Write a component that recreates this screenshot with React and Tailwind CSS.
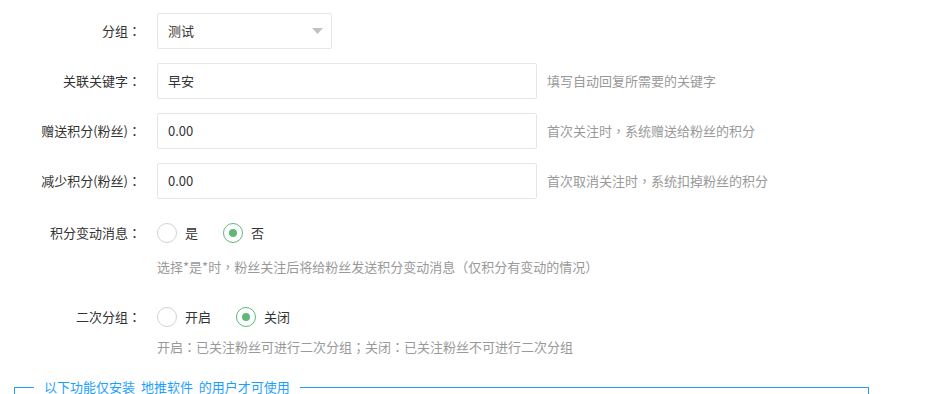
import React from "react";

const font = { fontFamily: '"Noto Sans CJK SC", "Noto Sans", sans-serif' };
const tc = { fontFamily: '"Noto Sans CJK TC", "Noto Sans CJK SC", sans-serif' };

function T({ children }) {
  const parts = String(children).split(/([，：；（）])/);
  return (
    <>
      {parts.map((p, i) =>
        /^[，：；（）]$/.test(p) ? (
          <span key={i} style={tc}>
            {p}
          </span>
        ) : (
          <React.Fragment key={i}>{p}</React.Fragment>
        )
      )}
    </>
  );
}

function Label({ children }) {
  return (
    <div className="w-[141px] shrink-0 text-right text-[13px] text-[#333] whitespace-nowrap">
      <T>{children}</T>
    </div>
  );
}

function Radio({ checked, label, last }) {
  return (
    <div className={`flex items-center ${last ? "" : "mr-[25px]"}`}>
      <span
        className={`flex h-[20px] w-[20px] items-center justify-center rounded-full border ${
          checked ? "border-[#5FB878]" : "border-[#d2d2d2]"
        }`}
      >
        {checked && <span className="h-[8px] w-[8px] rounded-full bg-[#5FB878]" />}
      </span>
      <span className="ml-[8px] text-[13px] text-[#333]">{label}</span>
    </div>
  );
}

export default function App() {
  return (
    <div className="h-[394px] w-[925px] overflow-hidden bg-white pt-[13px]" style={font}>
      {/* 分组 */}
      <div className="flex h-[36px] items-center">
        <Label>分组：</Label>
        <div className="ml-[16px] flex h-[36px] w-[175px] items-center justify-between rounded-[2px] border border-[#e6e6e6] pl-[10px] pr-[8px]">
          <span className="text-[13px] text-[#333]">测试</span>
          <svg width="11" height="6" viewBox="0 0 11 6">
            <path d="M0 0 L11 0 L5.5 6 Z" fill="#c2c2c2" />
          </svg>
        </div>
      </div>

      {[
        ["关联关键字：", "早安", "填写自动回复所需要的关键字"],
        ["赠送积分(粉丝)：", "0.00", "首次关注时，系统赠送给粉丝的积分"],
        ["减少积分(粉丝)：", "0.00", "首次取消关注时，系统扣掉粉丝的积分"],
      ].map(([l, v, h]) => (
        <div key={l} className="mt-[14px] flex h-[36px] items-center">
          <Label>{l}</Label>
          <div className="ml-[16px] flex h-[36px] w-[380px] items-center rounded-[2px] border border-[#e6e6e6] pl-[10px]">
            <span className="text-[13px] text-[#333]">{v}</span>
          </div>
          <span className="ml-[10px] text-[13px] text-[#999]">
            <T>{h}</T>
          </span>
        </div>
      ))}

      {/* 积分变动消息 */}
      <div className="mt-[16px] flex h-[36px] items-center">
        <Label>积分变动消息：</Label>
        <div className="ml-[16px] flex items-center">
          <Radio label="是" />
          <Radio label="否" checked last />
        </div>
      </div>
      <div className="mt-[6px] flex h-[20px] items-center pl-[157px] text-[13px] text-[#999]">
        <span>
          <T>选择*是*时，粉丝关注后将给粉丝发送积分变动消息（仅积分有变动的情况）</T>
        </span>
      </div>

      {/* 二次分组 */}
      <div className="mt-[22px] flex h-[36px] items-center">
        <Label>二次分组：</Label>
        <div className="ml-[16px] flex items-center">
          <Radio label="开启" />
          <Radio label="关闭" checked last />
        </div>
      </div>
      <div className="mt-[2px] flex h-[20px] items-center pl-[157px] text-[13px] text-[#999]">
        <span>
          <T>开启：已关注粉丝可进行二次分组；关闭：已关注粉丝不可进行二次分组</T>
        </span>
      </div>

      {/* fieldset */}
      <fieldset className="ml-[14px] mt-[20px] h-[60px] w-[855px] border border-[#1E9FFF] px-[19px]">
        <legend className="px-[10px] text-[13px] leading-[20px] text-[#1E9FFF] [word-spacing:3px]">
          以下功能仅安装 地推软件 的用户才可使用
        </legend>
      </fieldset>
    </div>
  );
}
